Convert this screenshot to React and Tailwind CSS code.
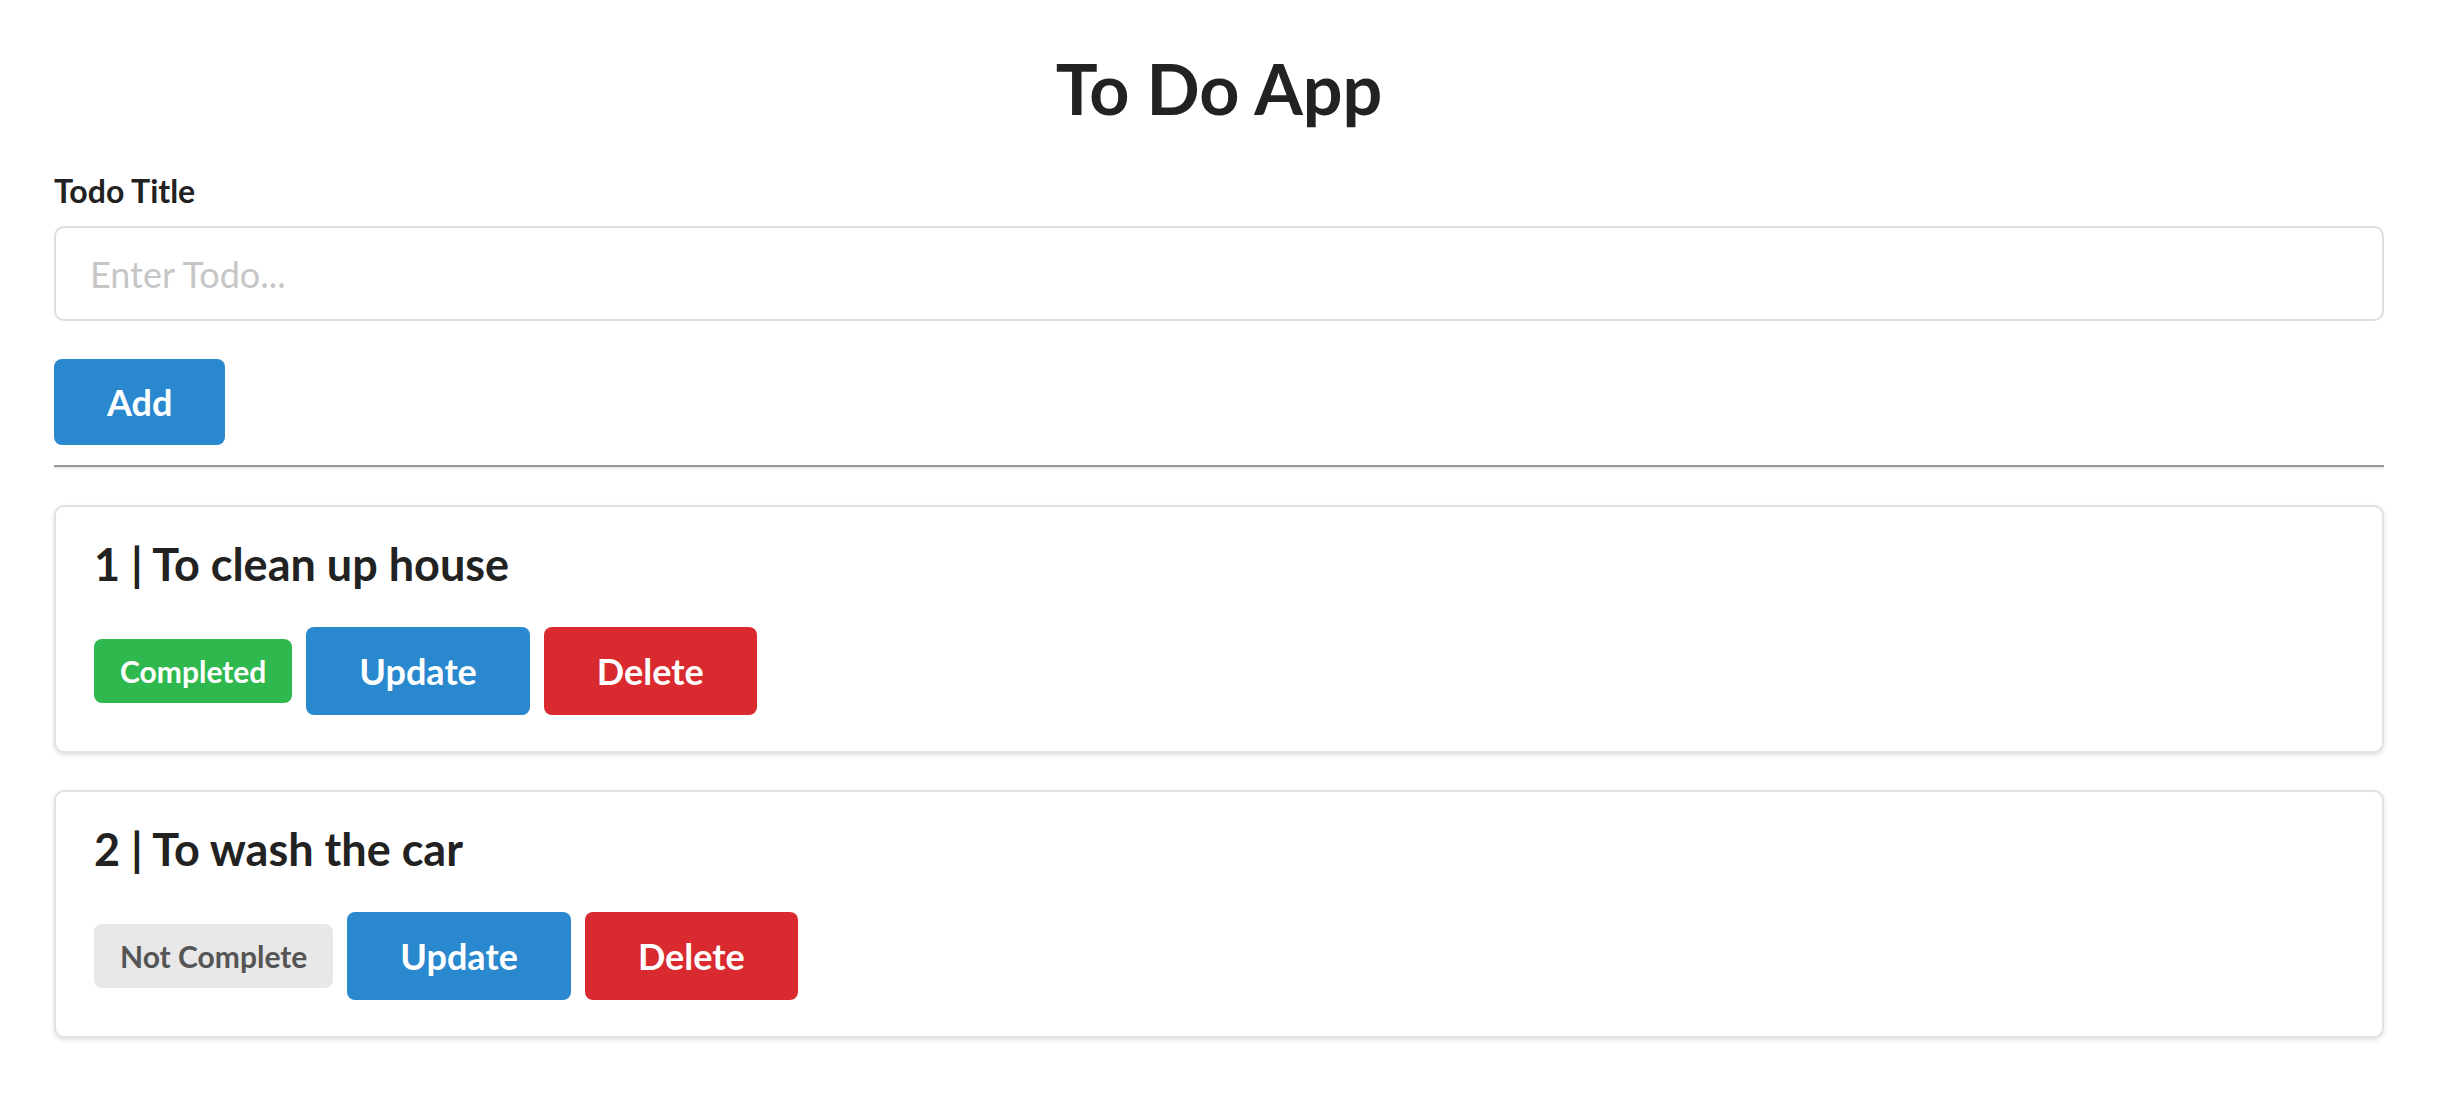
import React, { useState } from 'react';

const todos = [
  { id: 1, title: 'To clean up house', completed: true },
  { id: 2, title: 'To wash the car', completed: false },
];

const TodoCard = ({ todo }) => (
  <div className="rounded-[10px] border-2 border-[#e2e2e2] bg-white px-[38px] pt-[30px] pb-[36px] shadow-[0_2px_5px_rgba(0,0,0,0.12)]">
    <h3 className="text-[45px] font-bold leading-[1.2] text-[#222]">
      {todo.id} | {todo.title}
    </h3>
    <div className="mt-[36px] flex items-center gap-[14px]">
      {todo.completed ? (
        <span className="rounded-[8px] bg-[#2eb84e] px-[26px] py-[12px] text-[30px] font-bold leading-[40px] text-white">
          Completed
        </span>
      ) : (
        <span className="rounded-[8px] bg-[#e8e8e8] px-[26px] py-[12px] text-[30px] font-bold leading-[40px] text-[#555]">
          Not Complete
        </span>
      )}
      <button className="rounded-[8px] bg-[#2a88cf] px-[53px] py-[17px] text-[36px] font-bold leading-[54px] text-white">
        Update
      </button>
      <button className="rounded-[8px] bg-[#d92a30] px-[53px] py-[17px] text-[36px] font-bold leading-[54px] text-white">
        Delete
      </button>
    </div>
  </div>
);

export default function App() {
  const [text, setText] = useState('');

  return (
    <div className="min-h-screen bg-white px-[54px] pt-[46px] font-['Lato',sans-serif] text-[#222]">
      <h1 className="text-center text-[70px] font-bold leading-[1.2]">To Do App</h1>

      <label className="mt-[42px] block text-[32px] font-bold leading-[1.2]">Todo Title</label>
      <input
        value={text}
        onChange={(e) => setText(e.target.value)}
        placeholder="Enter Todo..."
        className="mt-[16px] block h-[95px] w-full rounded-[10px] border-2 border-[#dedede] px-[34px] text-[36px] outline-none placeholder:text-[#c6c6c6]"
      />
      <button className="mt-[38px] rounded-[8px] bg-[#2a88cf] px-[53px] py-[16px] text-[36px] font-bold leading-[54px] text-white">
        Add
      </button>

      <hr className="mt-[20px] border-0 border-t-2 border-b-2 border-t-[#999] border-b-[#eee]" />

      <div className="mt-[36px] flex flex-col gap-[37px]">
        {todos.map((t) => (
          <TodoCard key={t.id} todo={t} />
        ))}
      </div>
    </div>
  );
}
